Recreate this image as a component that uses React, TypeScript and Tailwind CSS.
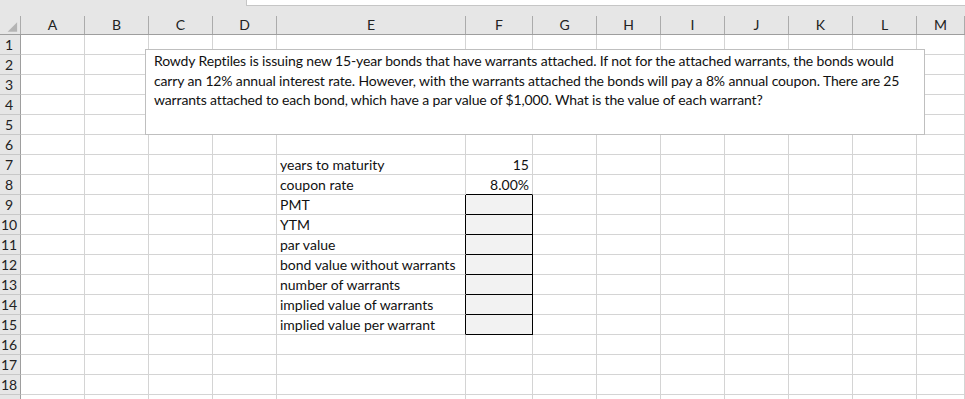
import React from 'react';

const cols = [
  { name: 'A', w: 'w-[64px]' },
  { name: 'B', w: 'w-[64px]' },
  { name: 'C', w: 'w-[64px]' },
  { name: 'D', w: 'w-[64px]' },
  { name: 'E', w: 'w-[189px]' },
  { name: 'F', w: 'w-[67px]' },
  { name: 'G', w: 'w-[64px]' },
  { name: 'H', w: 'w-[64px]' },
  { name: 'I', w: 'w-[64px]' },
  { name: 'J', w: 'w-[64px]' },
  { name: 'K', w: 'w-[64px]' },
  { name: 'L', w: 'w-[64px]' },
  { name: 'M', w: 'w-[48px]' },
];

const labels: Record<number, string> = {
  7: 'years to maturity',
  8: 'coupon rate',
  9: 'PMT',
  10: 'YTM',
  11: 'par value',
  12: 'bond value without warrants',
  13: 'number of warrants',
  14: 'implied value of warrants',
  15: 'implied value per warrant',
};

const values: Record<number, string> = {
  7: '15',
  8: '8.00%',
};

const rows = Array.from({ length: 19 }, (_, i) => i + 1);

function Cell({ row, col }: { row: number; col: string }) {
  const boxed = row >= 9 && row <= 15;
  let cls = 'h-full shrink-0 border-r border-b border-[#d4d4d4]';
  if (col === 'E' && boxed) cls = 'h-full shrink-0 border-r border-r-black border-b border-b-[#d4d4d4]';
  if (col === 'F' && boxed) cls = 'h-full shrink-0 border-r border-b border-black bg-[#f2f2f2]';
  if (col === 'F' && row === 8) cls = 'h-full shrink-0 border-r border-r-[#d4d4d4] border-b border-b-black';

  if (col === 'E' && labels[row]) {
    return (
      <div className={`${cls} pl-[3px] whitespace-nowrap leading-[19px]`}>{labels[row]}</div>
    );
  }
  if (col === 'F' && values[row]) {
    return <div className={`${cls} pr-[3px] text-right leading-[19px]`}>{values[row]}</div>;
  }
  return <div className={cls} />;
}

export default function App() {
  return (
    <div className="relative w-[965px] h-[399px] overflow-hidden bg-white font-['Lato',sans-serif] text-[14px] text-[#111]">
      {/* formula bar strip */}
      <div className="h-[16px] bg-[#e6e6e6] flex">
        <div className="w-[246px]" />
        <div className="flex-1 h-[6px] bg-white border-l border-b border-[#c6c6c6]" />
      </div>

      {/* column headers */}
      <div className="flex h-[19px] bg-[#e6e6e6] border-b border-[#9e9e9e]">
        <div className="w-[21px] shrink-0 border-r border-[#ababab] flex items-end justify-end">
          <svg width="21" height="18" viewBox="0 0 21 18">
            <polygon points="18,6 18,16 8,16" fill="#b4b4b4" />
          </svg>
        </div>
        {cols.map((c) => (
          <div
            key={c.name}
            className={`${c.w} shrink-0 border-r border-[#ababab] flex items-center justify-center text-[#222] leading-[18px]`}
          >
            {c.name}
          </div>
        ))}
      </div>

      {/* rows */}
      {rows.map((r) => (
        <div key={r} className="flex h-[20px]">
          <div className="w-[21px] shrink-0 bg-[#e6e6e6] border-r border-[#9e9e9e] border-b border-b-[#c8c8c8] pl-[1px] pr-[3px] flex justify-center leading-[19px] text-[#222]">
            {r < 19 ? r : ''}
          </div>
          {cols.map((c) => (
            <div key={c.name} className={`${c.w} shrink-0 h-full`}>
              <Cell row={r} col={c.name} />
            </div>
          ))}
        </div>
      ))}

      {/* text box shape */}
      <div className="absolute left-[145px] top-[49px] w-[780px] h-[86px] bg-white border border-[#bfbfbf] pl-[8px] pt-[1px] leading-[19.7px] tracking-[-0.14px] whitespace-nowrap">
        <div>Rowdy Reptiles is issuing new 15-year bonds that have warrants attached. If not for the attached warrants, the bonds would</div>
        <div>carry an 12% annual interest rate. However, with the warrants attached the bonds will pay a 8% annual coupon. There are 25</div>
        <div>warrants attached to each bond, which have a par value of $1,000. What is the value of each warrant?</div>
      </div>
    </div>
  );
}
